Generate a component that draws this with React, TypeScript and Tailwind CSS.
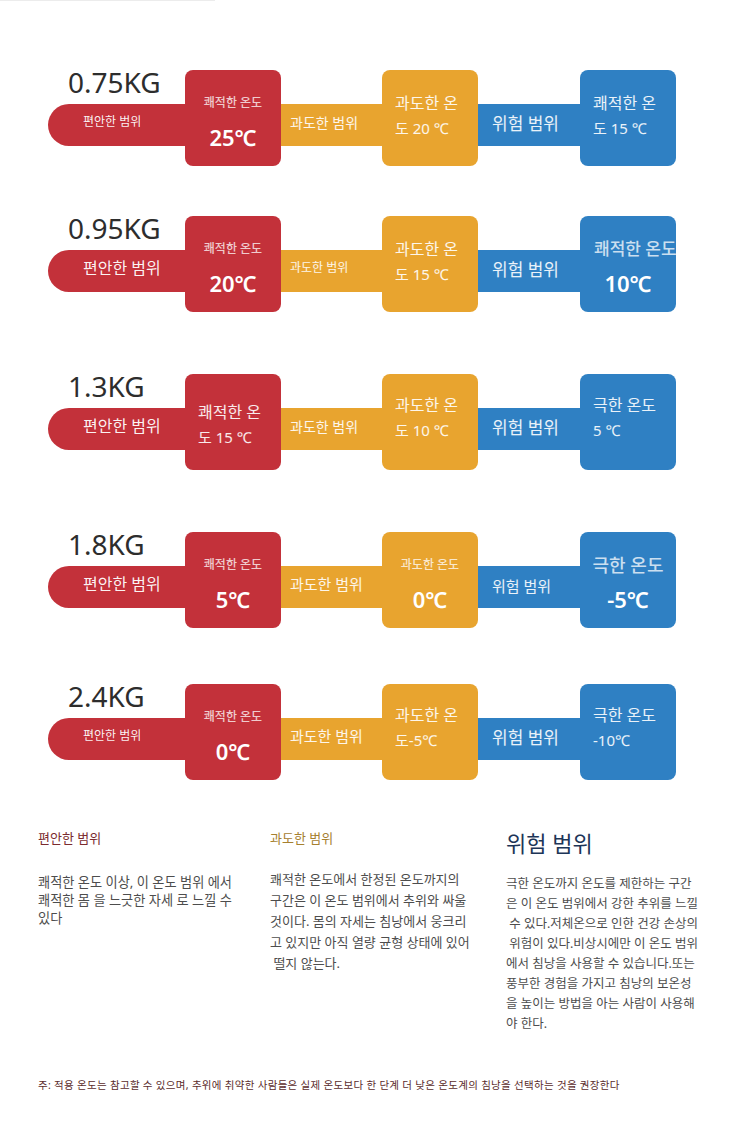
import type { ReactNode } from 'react';

const RED = 'bg-[#c3313a]';
const ORANGE = 'bg-[#e8a42f]';
const BLUE = 'bg-[#2f80c3]';

// small label on top, bold temperature below, centred in the square
function Big({ label, temp, labelClass = 'text-[12px] justify-center' }: { label: string; temp: string; labelClass?: string }) {
  return (
    <div className="flex flex-col h-full">
      <div className={`flex h-[30px] mt-[18px] items-center whitespace-nowrap text-white/75 font-medium ${labelClass}`}>{label}</div>
      <div className="flex justify-center mt-[4px] text-[22px] leading-[30px] font-semibold text-white whitespace-nowrap">{temp}</div>
    </div>
  );
}

// two plain lines, left aligned
function Two({ a, b, top = 'pt-[21px]', size = 'text-[16px]' }: { a: string; b: string; top?: string; size?: string }) {
  return (
    <div className={`flex flex-col pl-[13px] ${top} ${size} leading-[25px] text-white/90 whitespace-nowrap`}>
      <span>{a}</span>
      <span className="text-[15px]">{b}</span>
    </div>
  );
}

function Square({ color, children }: { color: string; children: ReactNode }) {
  return <div className={`w-[96px] h-[96px] shrink-0 rounded-[8px] ${color}`}>{children}</div>;
}

type Row = {
  kg: string;
  mt: string;
  pill: string;
  red: ReactNode;
  obar: string;
  orange: ReactNode;
  bbar: string;
  blue: ReactNode;
};

const rows: Row[] = [
  {
    kg: '0.75KG',
    mt: 'mt-0',
    pill: 'text-[12px]',
    red: <Big label="쾌적한 온도" temp="25℃" />,
    obar: 'text-[14px]',
    orange: <Two a="과도한 온" b="도 20 ℃" />,
    bbar: 'text-[17px]',
    blue: <Two a="쾌적한 온" b="도 15 ℃" />,
  },
  {
    kg: '0.95KG',
    mt: 'mt-[50px]',
    pill: 'text-[16px]',
    red: <Big label="쾌적한 온도" temp="20℃" />,
    obar: 'text-[12px]',
    orange: <Two a="과도한 온" b="도 15 ℃" />,
    bbar: 'text-[17px]',
    blue: <Big label="쾌적한 온도" temp="10℃" labelClass="text-[17px] pl-[14px]" />,
  },
  {
    kg: '1.3KG',
    mt: 'mt-[62px]',
    pill: 'text-[16px]',
    red: <Two a="쾌적한 온" b="도 15 ℃" top="pt-[26px]" />,
    obar: 'text-[14px]',
    orange: <Two a="과도한 온" b="도 10 ℃" top="pt-[19px]" />,
    bbar: 'text-[17px]',
    blue: <Two a="극한 온도" b=" 5 ℃" top="pt-[19px]" />,
  },
  {
    kg: '1.8KG',
    mt: 'mt-[62px]',
    pill: 'text-[16px]',
    red: <Big label="쾌적한 온도" temp="5℃" />,
    obar: 'text-[15px]',
    orange: <Big label="과도한 온도" temp="0℃" />,
    bbar: 'text-[15px]',
    blue: <Big label="극한 온도" temp="-5℃" labelClass="text-[18px] justify-center" />,
  },
  {
    kg: '2.4KG',
    mt: 'mt-[56px]',
    pill: 'text-[12px]',
    red: <Big label="쾌적한 온도" temp="0℃" />,
    obar: 'text-[15px]',
    orange: <Two a="과도한 온" b="도-5℃" top="pt-[19px]" />,
    bbar: 'text-[17px]',
    blue: <Two a="극한 온도" b="-10℃" top="pt-[19px]" />,
  },
];

export default function App() {
  return (
    <div className="relative w-[750px] h-[1133px] bg-white overflow-hidden font-['Noto_Sans','Noto_Sans_CJK_KR',sans-serif]">
      <div className="absolute top-0 left-0 w-[215px] h-px bg-[#ececec]" />

      {/* weight rows */}
      <div className="pt-[70px] pl-[48px] flex flex-col">
        {rows.map((r) => (
          <div key={r.kg} className={`flex items-start h-[96px] ${r.mt}`}>
            <div className="w-[137px] shrink-0 flex flex-col">
              <div className="h-[34px] pl-[20px] text-[28px] leading-[24px] text-[#2d2d2d]">{r.kg}</div>
              <div className={`h-[42px] ${RED} rounded-l-full flex items-center pl-[35px] pb-[6px] text-white/95 ${r.pill}`}>
                편안한 범위
              </div>
            </div>
            <Square color={RED}>{r.red}</Square>
            <div className={`w-[101px] h-[42px] mt-[34px] shrink-0 ${ORANGE} flex items-center pl-[9px] pb-[6px] text-white/90 whitespace-nowrap ${r.obar}`}>
              과도한 범위
            </div>
            <Square color={ORANGE}>{r.orange}</Square>
            <div className={`w-[102px] h-[42px] mt-[34px] shrink-0 ${BLUE} flex items-center pl-[14px] pb-[2px] text-white/90 whitespace-nowrap ${r.bbar}`}>
              위험 범위
            </div>
            <Square color={BLUE}>{r.blue}</Square>
          </div>
        ))}
      </div>

      {/* legend */}
      <div className="flex mt-[48px] pl-[38px]">
        <div className="w-[232px] shrink-0">
          <div className="text-[13px] leading-[20px] text-[#7b2b2e]">편안한 범위</div>
          <p className="mt-[25px] text-[13.2px] leading-[18px] text-[#4d4d4d] whitespace-nowrap">
            쾌적한 온도 이상, 이 온도 범위 에서
            <br />
            쾌적한 몸 을 느긋한 자세 로 느낄 수
            <br />
            있다
          </p>
        </div>
        <div className="w-[236px] shrink-0">
          <div className="text-[13px] leading-[20px] text-[#a6802f]">과도한 범위</div>
          <p className="mt-[21px] text-[13px] leading-[21px] text-[#4d4d4d] whitespace-nowrap">
            쾌적한 온도에서 한정된 온도까지의
            <br />
            구간은 이 온도 범위에서 추위와 싸울
            <br />
            것이다. 몸의 자세는 침낭에서 웅크리
            <br />
            고 있지만 아직 열량 균형 상태에 있어
            <br />
            &nbsp;떨지 않는다.
          </p>
        </div>
        <div className="w-[216px] shrink-0">
          <div className="text-[22px] leading-[30px] text-[#1d3557]">위험 범위</div>
          <p className="mt-[16px] text-[12.5px] leading-[20px] text-[#4d4d4d] whitespace-nowrap">
            극한 온도까지 온도를 제한하는 구간
            <br />
            은 이 온도 범위에서 강한 추위를 느낄
            <br />
            &nbsp;수 있다.저체온으로 인한 건강 손상의
            <br />
            &nbsp;위험이 있다.비상시에만 이 온도 범위
            <br />
            에서 침낭을 사용할 수 있습니다.또는
            <br />
            풍부한 경험을 가지고 침낭의 보온성
            <br />
            을 높이는 방법을 아는 사람이 사용해
            <br />
            야 한다.
          </p>
        </div>
      </div>

      <p className="mt-[44px] pl-[38px] text-[10.5px] leading-[14px] tracking-[0.3px] text-[#5b2c2c] whitespace-nowrap">
        주: 적용 온도는 참고할 수 있으며, 추위에 취약한 사람들은 실제 온도보다 한 단계 더 낮은 온도계의 침낭을 선택하는 것을 권장한다
      </p>
    </div>
  );
}
